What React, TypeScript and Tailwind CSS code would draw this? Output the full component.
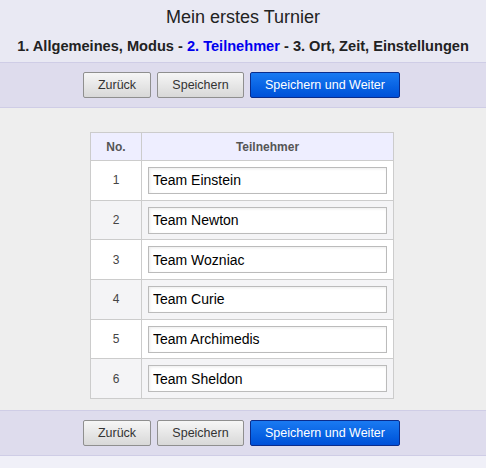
import React from "react";

const teams = [
  "Team Einstein",
  "Team Newton",
  "Team Wozniac",
  "Team Curie",
  "Team Archimedis",
  "Team Sheldon",
];

function Toolbar() {
  return (
    <div className="flex h-[46px] items-center justify-center gap-[6px] border-y border-[#cfcde6] bg-[#dedced] pr-[3px]">
      <button className="h-[26px] w-[68px] rounded-[2px] border border-[#8f8f8f] bg-gradient-to-b from-[#f6f6f6] to-[#d8d8d8] text-[12.5px] text-[#333]">
        Zurück
      </button>
      <button className="h-[26px] w-[87px] rounded-[2px] border border-[#8f8f8f] bg-gradient-to-b from-[#f6f6f6] to-[#d8d8d8] text-[12.5px] text-[#333]">
        Speichern
      </button>
      <button className="h-[26px] w-[150px] rounded-[2px] border border-[#0a2c8c] bg-gradient-to-b from-[#1a7af2] to-[#0050d8] text-[12.5px] text-white">
        Speichern und Weiter
      </button>
    </div>
  );
}

export default function App() {
  return (
    <div className="min-h-[468px] w-[486px] bg-[#f0f0f8] font-['Liberation_Sans',Arial,sans-serif]">
      {/* Header */}
      <div className="bg-[#e9e9f3] pt-[5px] text-center">
        <h1 className="h-[26px] text-[18px] leading-[24px] text-[#222]">Mein erstes Turnier</h1>
        <div className="h-[31px] pt-[5px] text-[14.6px] font-bold leading-[20px] text-[#222]">
          1. Allgemeines, Modus - <span className="text-[#0000ee]">2. Teilnehmer</span> - 3. Ort, Zeit, Einstellungen
        </div>
      </div>

      <Toolbar />

      {/* Content */}
      <div className="bg-[#eeeeee] pb-[11px] pt-[24px]">
        <table className="ml-[90px] w-[304px] border-collapse bg-white text-[12px]">
          <thead>
            <tr className="h-[28px] bg-[#eeeeff]">
              <th className="w-[51px] border border-[#cccccc] font-bold text-[#555]">No.</th>
              <th className="border border-[#cccccc] font-bold text-[#555]">Teilnehmer</th>
            </tr>
          </thead>
          <tbody>
            {teams.map((t, i) => (
              <tr key={t} className={i % 2 === 1 ? "h-[39.7px] bg-[#f4f4f6]" : "h-[39.7px] bg-white"}>
                <td className="border border-[#cccccc] text-center text-[#444]">{i + 1}</td>
                <td className="border border-[#cccccc] pl-[6px] pr-[6px]">
                  <input
                    defaultValue={t}
                    className="block h-[27px] w-[239px] border border-[#bbbbbb] bg-white px-[4px] text-[14px] text-black shadow-[inset_1px_1px_3px_rgba(0,0,0,0.08)] outline-none"
                  />
                </td>
              </tr>
            ))}
          </tbody>
        </table>
      </div>

      <Toolbar />
    </div>
  );
}
